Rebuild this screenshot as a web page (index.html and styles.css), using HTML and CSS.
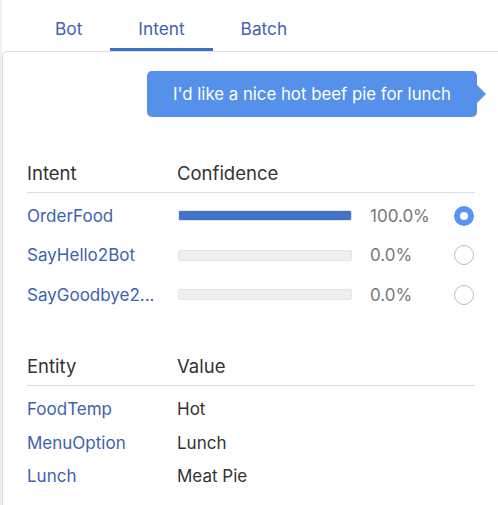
FILE: index.html
```html
<!DOCTYPE html>
<html lang="en">
<head>
<meta charset="utf-8">
<link rel="stylesheet" href="styles.css">
</head>
<body>
<div class="app">
  <nav class="tabs">
    <div class="tab">Bot</div>
    <div class="tab active">Intent</div>
    <div class="tab">Batch</div>
  </nav>
  <main class="panel">
    <div class="bubble-row">
      <div class="bubble">I'd like a nice hot beef pie for lunch</div>
    </div>

    <section class="intents">
      <div class="thead">
        <div class="c-name">Intent</div>
        <div class="c-conf">Confidence</div>
      </div>
      <div class="irow">
        <div class="c-name link">OrderFood</div>
        <div class="bar"><div class="fill" style="width:100%"></div></div>
        <div class="pct">100.0%</div>
        <div class="radio on"></div>
      </div>
      <div class="irow">
        <div class="c-name link">SayHello2Bot</div>
        <div class="bar"><div class="fill" style="width:0%"></div></div>
        <div class="pct">0.0%</div>
        <div class="radio"></div>
      </div>
      <div class="irow">
        <div class="c-name link">SayGoodbye2...</div>
        <div class="bar"><div class="fill" style="width:0%"></div></div>
        <div class="pct">0.0%</div>
        <div class="radio"></div>
      </div>
    </section>

    <section class="entities">
      <div class="thead">
        <div class="c-name">Entity</div>
        <div class="c-conf">Value</div>
      </div>
      <div class="erow"><div class="c-name link">FoodTemp</div><div class="c-val">Hot</div></div>
      <div class="erow"><div class="c-name link">MenuOption</div><div class="c-val">Lunch</div></div>
      <div class="erow"><div class="c-name link">Lunch</div><div class="c-val">Meat Pie</div></div>
    </section>
  </main>
</div>
</body>
</html>
```
FILE: styles.css
```css
* { box-sizing: border-box; }
html, body { margin: 0; padding: 0; background: #fff; }
body {
  font-family: "Inter", "Open Sans", sans-serif;
  color: #333;
}
.app {
  min-height: 505px;
  border-left: 2px solid #efefef;
  display: flex;
  flex-direction: column;
}
.tabs {
  display: flex;
  height: 51px;
  padding-left: 25px;
}
.tab {
  padding: 8px 28px 0;
  display: flex;
  align-items: center;
  font-size: 17.3px;
  color: #3d63b0;
  border-bottom: 3px solid transparent;
}
.tab.active { border-bottom-color: #3f6fc6; }
.panel {
  flex: 1;
  border-top: 1px solid #dedede;
  border-left: 1px solid #dedede;
  border-top-left-radius: 5px;
  padding: 19px 23px 0 24px;
}
.bubble-row {
  display: flex;
  justify-content: flex-end;
}
.bubble {
  position: relative;
  background: #5591eb;
  color: #fff;
  font-size: 16.8px;
  height: 46px;
  width: 330px;
  border-radius: 5px;
  display: flex;
  align-items: center;
  justify-content: center;
  margin-right: -2px;
  padding-bottom: 1px;
}
.bubble::after {
  content: "";
  position: absolute;
  right: -9px;
  top: 14px;
  border-left: 9px solid #5591eb;
  border-top: 9px solid transparent;
  border-bottom: 9px solid transparent;
}
.intents { margin-top: 43px; }
.thead {
  display: flex;
  align-items: flex-end;
  height: 34px;
  padding-bottom: 8px;
  border-bottom: 1px solid #d8dee8;
  font-size: 18.5px;
  color: #333;
}
.intents .thead { height: 33px; }
.c-name {
  width: 150px;
  flex: none;
  white-space: nowrap;
}
.link { color: #3c63b1; font-size: 17px; }
.irow {
  display: flex;
  align-items: center;
  height: 39.5px;
}
.intents .thead + .irow { margin-top: 3px; }
.bar {
  width: 174px;
  height: 11px;
  margin-left: 1px;
  background: #efefef;
  border: 1px solid #e4e4e4;
  border-radius: 2px;
  overflow: hidden;
}
.fill { height: 100%; background: #4373c9; }
.pct {
  margin-left: 18px;
  font-size: 17px;
  color: #777;
  flex: 1;
}
.radio {
  width: 20px;
  height: 20px;
  border-radius: 50%;
  border: 1.5px solid #bdbdbd;
  margin-right: 1px;
  background: #fff;
}
.radio.on {
  border: 6.5px solid #5b94ef;
  background: #fff;
}
.entities { margin-top: 37px; }
.entities .thead + .erow { margin-top: 7px; }
.erow {
  display: flex;
  align-items: center;
  height: 33.5px;
}
.c-val { font-size: 17px; color: #333; }
```
